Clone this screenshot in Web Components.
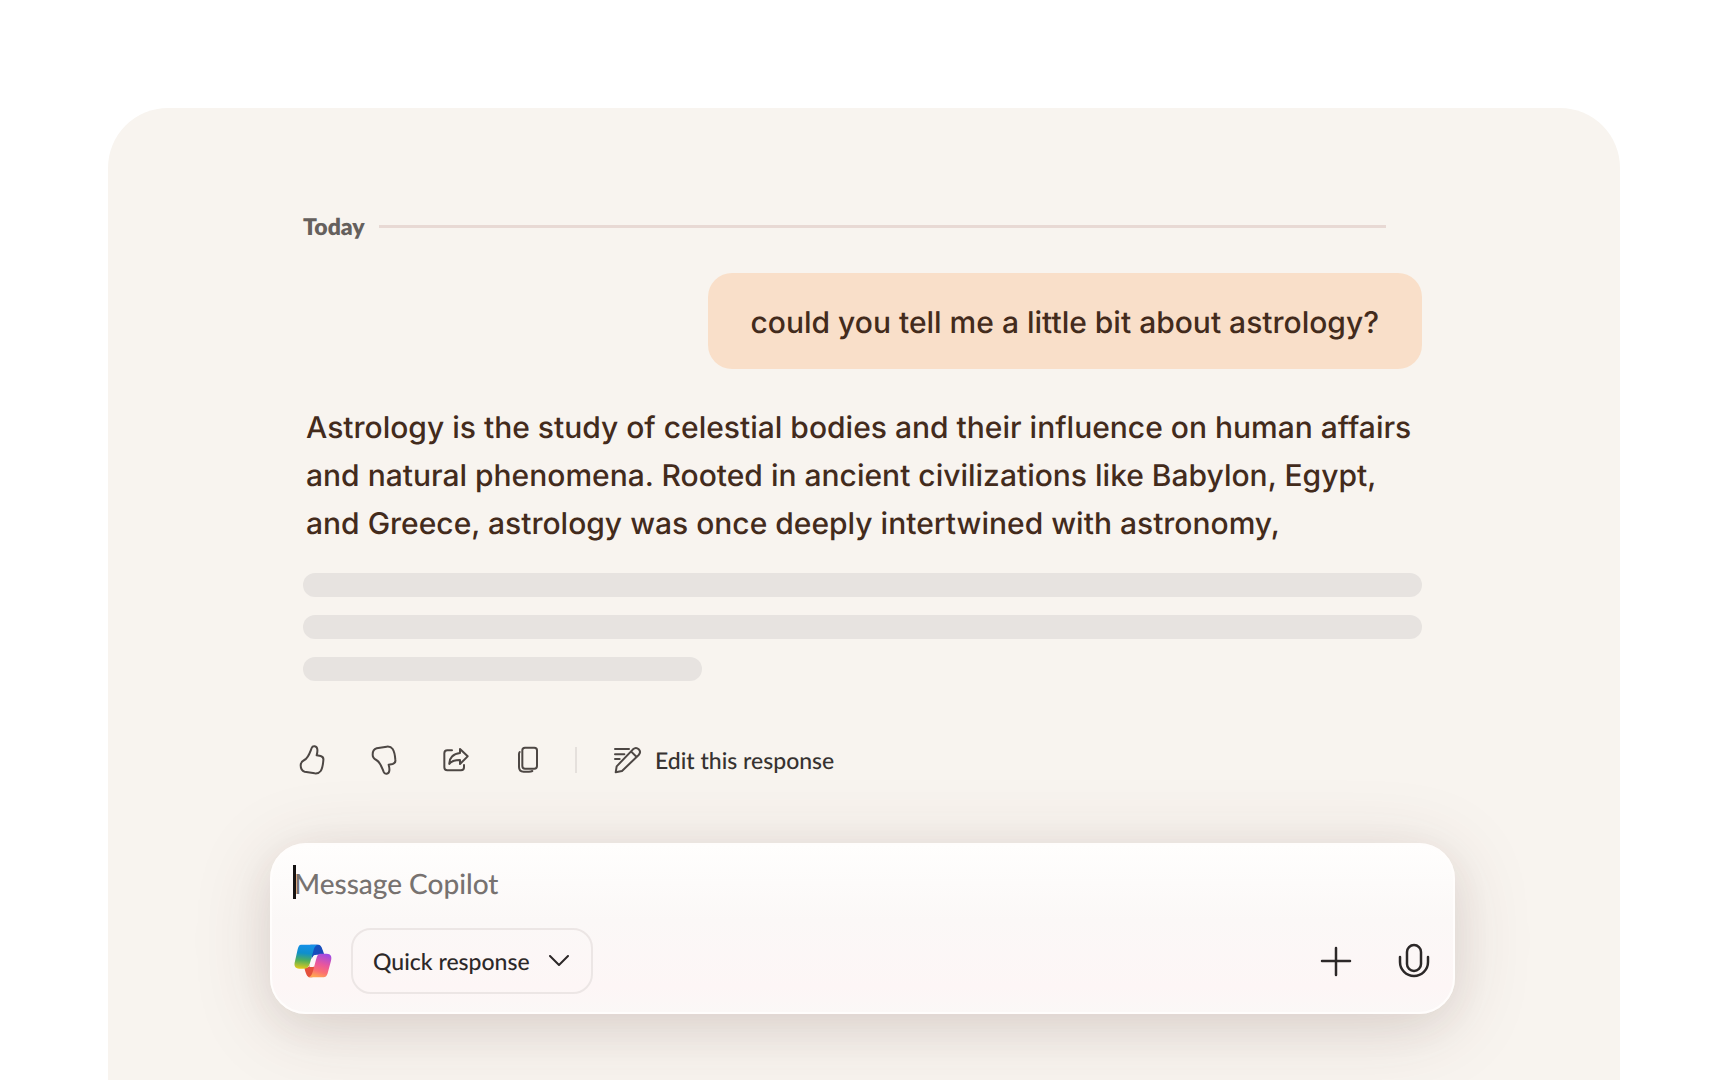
<!DOCTYPE html>
<html lang="en">
<head>
<meta charset="utf-8">
<meta name="viewport" content="width=device-width, initial-scale=1">
<title>Copilot</title>
<style>
  body {
    margin: 0;
    background: #ffffff;
    font-family: Inter, "Liberation Sans", sans-serif;
    text-rendering: geometricPrecision;
  }
</style>
</head>
<body>

<chat-panel>
  <day-divider>Today</day-divider>
  <user-message>could you tell me a little bit about astrology?</user-message>
  <reply-message>Astrology is the study of celestial bodies and their influence on human affairs and natural phenomena. Rooted in ancient civilizations like Babylon, Egypt, and Greece, astrology was once deeply intertwined with astronomy,</reply-message>
  <response-actions>Edit this response</response-actions>
  <message-composer slot="composer" placeholder="Message Copilot"></message-composer>
</chat-panel>

<script>
const withTemplate = (html) => {
  const template = document.createElement('template');
  template.innerHTML = html;
  return class extends HTMLElement {
    constructor(){
      super();
      this.attachShadow({mode: 'open'});
      this.shadowRoot.appendChild(template.content.cloneNode(true));
    }
  };
};

class ChatPanel extends withTemplate(`
<style>
  :host {
    display: block;
    box-sizing: border-box;
    min-height: calc(100vh - 108px);
    margin: 108px 108px 0;
    padding: 104px 165px 66px 162px;
    border-radius: 60px 60px 0 0;
    background: #f8f4ef;
  }

  .thread {
    padding: 0 33px;
  }
</style>
<main>
  <div class="thread"><slot></slot></div>
  <slot name="composer"></slot>
</main>
`) {}

class DayDivider extends withTemplate(`
<style>
  :host {
    display: flex;
    align-items: center;
    gap: 14px;
    margin-right: 36px;
    font: 800 23px/28px Lato, sans-serif;
    color: #65605d;
  }

  .line {
    flex: 1;
    height: 3px;
    background: #e8d9d4;
  }
</style>
<slot></slot>
<div class="line"></div>
`) {}

class UserMessage extends withTemplate(`
<style>
  :host {
    display: flex;
    justify-content: flex-end;
    margin-top: 33px;
    font-size: 30px;
    font-weight: 500;
    line-height: 48px;
    color: #432b1c;
  }

  .bubble {
    padding: 26px 43px 22px;
    border-radius: 24px;
    background: #f9dfc9;
  }
</style>
<div class="bubble"><slot></slot></div>
`) {}

class ReplyMessage extends withTemplate(`
<style>
  :host {
    display: block;
    margin-top: 35px;
    font-size: 30px;
    font-weight: 500;
    line-height: 48px;
    color: #432b1c;
  }

  p {
    margin: 0 0 25px;
    padding-left: 3px;
  }

  .pending {
    display: grid;
    gap: 18px;
  }

  .pending div {
    height: 24px;
    border-radius: 12px;
    background: #e7e3e0;
  }

  .pending div:last-child {
    width: 399px;
  }
</style>
<p><slot></slot></p>
<div class="pending"><div></div><div></div><div></div></div>
`) {}

class ResponseActions extends withTemplate(`
<style>
  :host {
    display: flex;
    align-items: center;
    margin: 62px 0 0 -5px;
    font: 500 23px/34px Lato, sans-serif;
    color: #363230;
  }

  button {
    display: flex;
    align-items: center;
    justify-content: center;
    gap: 12px;
    height: 34px;
    padding: 0;
    border: 0;
    background: none;
    font: inherit;
    text-rendering: inherit;
    color: inherit;
    cursor: pointer;
  }

  .icon {
    width: 28px;
    margin-right: 44px;
  }

  .divider {
    width: 2px;
    height: 26px;
    margin: 0 36px 0 -11px;
    background: #e5e0dc;
  }

  svg {
    flex: none;
    fill: none;
    stroke: #4d4744;
    stroke-width: 6;
    stroke-linejoin: round;
    stroke-linecap: round;
  }
</style>
<button class="icon" aria-label="Like">
  <svg width="28" height="32" viewBox="0 0 84 96"><path d="M41 12C44 4 57 5 58 16C59 24 57 30 56 34L68 36C75 38 77 43 76 49C75 62 72 75 68 81C63 88 58 89 50 88L20 83C12 81 8 74 8 64C8 56 13 51 19 48C31 42 34 30 41 12Z"/></svg>
</button>
<button class="icon" aria-label="Dislike">
  <svg width="28" height="32" viewBox="0 0 84 96"><path transform="matrix(1 0 0 -1 0 96)" d="M41 12C44 4 57 5 58 16C59 24 57 30 56 34L68 36C75 38 77 43 76 49C75 62 72 75 68 81C63 88 58 89 50 88L20 83C12 81 8 74 8 64C8 56 13 51 19 48C31 42 34 30 41 12Z"/></svg>
</button>
<button class="icon" aria-label="Share">
  <svg width="28" height="28" viewBox="0 0 84 84"><path d="M30 13H16Q7 13 7 22V64Q7 73 16 73H57Q66 73 66 64V57M54 9L77 31L54 54V42C38 42 28 45 22 54C21 36 34 23 54 21Z"/></svg>
</button>
<button class="icon" aria-label="Copy">
  <svg width="22" height="30" viewBox="0 0 66 90"><rect x="16" y="8" width="44" height="63" rx="8"/><path d="M8 21C5 25 6 28 6 32V66Q6 80 20 80H36Q42 80 46 78"/></svg>
</button>
<div class="divider"></div>
<button>
  <svg width="30" height="30" viewBox="0 0 90 90"><path d="M6 12H48M6 28H34M6 42H20M8 82L11 64L60 13C72 2 88 18 77 30L27 78ZM54 19L71 36"/></svg>
  <slot></slot>
</button>
`) {}

class MessageComposer extends withTemplate(`
<style>
  :host {
    display: block;
    box-sizing: border-box;
    margin-top: 66px;
    padding: 17px 23px 18px 21px;
    border: 2px solid #fffdfc;
    border-radius: 36px;
    background: linear-gradient(#fffefd, #fbf8f7 45%, #fdf6f6 85%, #fbf8f7);
    box-shadow: 0 12px 80px rgba(90, 50, 45, .15), 0 12px 40px rgba(90, 50, 45, .07);
    color: #2c2828;
  }

  .entry {
    position: relative;
  }

  .caret {
    position: absolute;
    left: 0;
    top: 3px;
    width: 3px;
    height: 34px;
    background: #151313;
  }

  input {
    display: block;
    box-sizing: border-box;
    width: 100%;
    height: 42px;
    padding: 0 0 0 1px;
    border: 0;
    outline: none;
    background: none;
    font: 500 28px/42px Lato, sans-serif;
    text-rendering: inherit;
    color: inherit;
  }

  input::placeholder {
    color: #777270;
    opacity: 1;
  }

  .bar {
    display: flex;
    align-items: center;
    margin-top: 24px;
  }

  .mode {
    display: grid;
    align-items: center;
    margin: 0 auto 0 18px;
  }

  .mode > * {
    grid-area: 1 / 1;
  }

  select {
    appearance: none;
    width: 242px;
    height: 66px;
    padding: 0 20px;
    border: 2px solid #ece6e5;
    border-radius: 20px;
    background: none;
    font: 500 23px Lato, sans-serif;
    text-rendering: inherit;
    color: inherit;
  }

  .chevron {
    justify-self: end;
    margin-right: 24px;
    pointer-events: none;
  }

  button {
    display: flex;
    padding: 0;
    border: 0;
    background: none;
    color: inherit;
    cursor: pointer;
  }

  button + button {
    margin-left: 46px;
  }

  .stroke {
    fill: none;
    stroke: currentColor;
    stroke-width: 2.5;
    stroke-linecap: round;
    stroke-linejoin: round;
  }

  .chevron.stroke {
    stroke-width: 2;
  }
</style>
<div class="entry">
  <input type="text" aria-label="Message Copilot">
  <span class="caret"></span>
</div>
<div class="bar">
  <svg width="40" height="38" viewBox="40 52 120 114" aria-hidden="true">
    <defs>
      <linearGradient id="cool" x1="0.4" y1="0" x2="0.3" y2="1">
        <stop offset="0" stop-color="#1590e8"/>
        <stop offset=".35" stop-color="#0f8fcb"/>
        <stop offset=".65" stop-color="#4fae5c"/>
        <stop offset="1" stop-color="#e3ca1b"/>
      </linearGradient>
      <linearGradient id="warm" x1="0.7" y1="0" x2="0.4" y2="1">
        <stop offset="0" stop-color="#a04be4"/>
        <stop offset=".45" stop-color="#e9579c"/>
        <stop offset=".75" stop-color="#fb6f72"/>
        <stop offset="1" stop-color="#ffa552"/>
      </linearGradient>
      <linearGradient id="fold" x1="0" y1="0" x2="1" y2="1">
        <stop offset="0" stop-color="#0c56c4"/>
        <stop offset="1" stop-color="#2344b4"/>
      </linearGradient>
    </defs>
    <path fill="url(#fold)" d="M92 60H114C123 60 126 66 129 76L134 90H112C104 90 100 93 96 103Z"/>
    <path fill="#e4503c" d="M74 129C84 130 88 127 91 121L106 128L98 158H92C82 158 79 148 74 129Z"/>
    <path fill="url(#cool)" d="M64 60H116C107 61 104 68 101 79L91 115C87 128 82 132 71 132H59C46 132 42 123 46 110L54 74C56 65 59 60 64 60Z"/>
    <path fill="#fbf6f8" d="M103 92H113L101 127H89C93 121 96 101 103 92Z"/>
    <path fill="url(#warm)" d="M124 87H141C154 87 157 96 154 108L145 142C142 154 138 158 130 158H86C94 156 97 149 100 139L109 105C113 91 116 87 124 87Z"/>
  </svg>
  <div class="mode">
    <select aria-label="Response mode"><option>Quick response</option></select>
    <svg class="chevron stroke" width="20" height="12" viewBox="0 0 20 12"><path d="M1 1L10 10L19 1"/></svg>
  </div>
  <button aria-label="Add">
    <svg class="stroke" width="32" height="32" viewBox="0 0 32 32"><path d="M16 3V30M2 16H30"/></svg>
  </button>
  <button aria-label="Speak">
    <svg class="stroke" width="32" height="36" viewBox="0 0 32 36"><rect x="9" y="2" width="14" height="26" rx="7"/><path d="M2 14V19A14 14 0 0 0 30 19V14"/></svg>
  </button>
</div>
`) {
  connectedCallback(){
    this.shadowRoot.querySelector('input').placeholder = this.getAttribute('placeholder');
  }
}

window.customElements.define('chat-panel', ChatPanel);
window.customElements.define('day-divider', DayDivider);
window.customElements.define('user-message', UserMessage);
window.customElements.define('reply-message', ReplyMessage);
window.customElements.define('response-actions', ResponseActions);
window.customElements.define('message-composer', MessageComposer);
</script>
</body>
</html>
